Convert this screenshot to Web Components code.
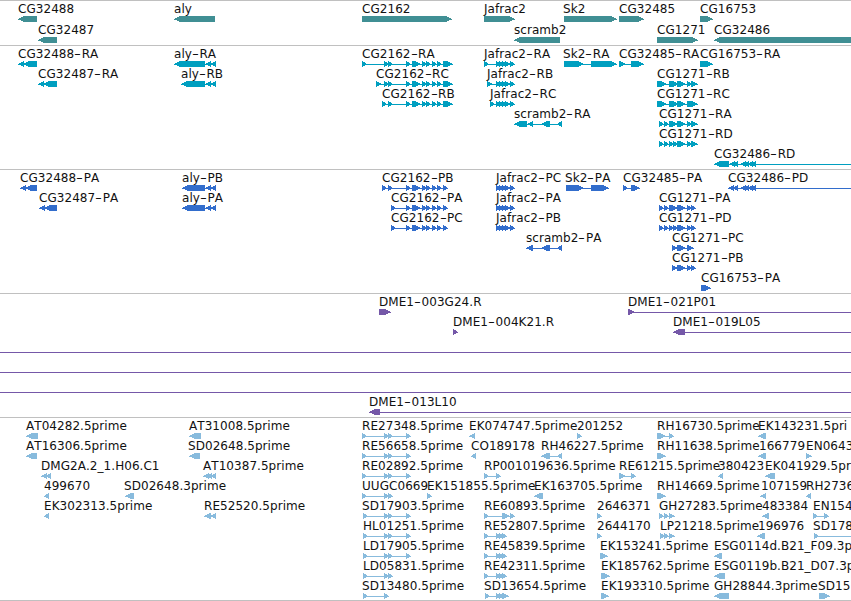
<!DOCTYPE html>
<html lang="en">
<head>
<meta charset="utf-8">
<title>Genome browser</title>
<style>
  html, body {
    margin: 0;
    background: #fff;
  }
  body {
    width: 851px;
    height: 601px;
    overflow: hidden;
  }
</style>
</head>
<body>
<genome-browser></genome-browser>

<script>
// Exon runs shared by several transcripts
const CG2162_CDS = '406-411 412-421 422-427 426-431 432-437 437-442';
const JAFRAC = '496-501 499-505 502-508 505-511 510-515';
const CG1271_MID = '677-686 687-692';
const CG32486_CDS = '740-746 744-749 748-753 751-756 851-870';

// Each lane is a list of [label, label x, strand, exons]
const TRACKS = [
  {
    name: 'gene', color: '#408f94', laneHeight: 21, gap: 2,
    lanes: [
      [
        ['CG32488', 18, '-', '18-37'],
        ['aly', 174, '-', '174-215'],
        ['CG2162', 362, '+', '362-452'],
        ['Jafrac2', 484, '+', '484-515'],
        ['Sk2', 563, '+', '564-617'],
        ['CG32485', 619, '+', '619-644'],
        ['CG16753', 700, '+', '700-713']
      ],
      [
        ['CG32487', 38, '-', '38-57'],
        ['scramb2', 514, '-', '514-560'],
        ['CG1271', 657, '+', '657-698'],
        ['CG32486', 714, '-', '714-870']
      ]
    ]
  },
  {
    name: 'transcript', color: '#009fc0', laneHeight: 20, gap: 3,
    lanes: [
      [
        ['CG32488-RA', 18, '-', '18-24 23-37'],
        ['aly-RA', 174, '-', '174-205 205-211 210-216'],
        ['CG2162-RA', 362, '+', `362-367 384-389 388-393 ${CG2162_CDS} 443-453`],
        ['Jafrac2-RA', 484, '+', `484-489 ${JAFRAC}`],
        ['Sk2-RA', 563, '+', '564-584 591-617'],
        ['CG32485-RA', 619, '+', '619-626 631-644'],
        ['CG16753-RA', 700, '+', '700-713']
      ],
      [
        ['CG32487-RA', 38, '-', '38-44 43-57'],
        ['aly-RB', 181, '-', '181-205 205-211 210-216'],
        ['CG2162-RC', 376, '+', `376-382 384-389 388-393 ${CG2162_CDS} 443-453`],
        ['Jafrac2-RB', 487, '+', `487-493 ${JAFRAC}`],
        ['CG1271-RB', 657, '+', `657-667 669-679 ${CG1271_MID} 691-698`]
      ],
      [
        ['CG2162-RB', 382, '+', `382-387 388-393 ${CG2162_CDS} 443-453`],
        ['Jafrac2-RC', 490, '+', `490-495 ${JAFRAC}`],
        ['CG1271-RC', 657, '+', '657-667 669-679 677-686 687-698']
      ],
      [
        ['scramb2-RA', 514, '-', '514-527 527-533 541-550 557-562'],
        ['CG1271-RA', 659, '+', `659-664 664-669 669-678 ${CG1271_MID} 691-698`]
      ],
      [
        ['CG1271-RD', 659, '+', `659-664 664-669 669-674 673-678 ${CG1271_MID} 691-698`]
      ],
      [
        ['CG32486-RD', 714, '-', `714-729 729-735 733-738 ${CG32486_CDS}`]
      ]
    ]
  },
  {
    name: 'protein', color: '#326dcc', laneHeight: 20, gap: 3,
    lanes: [
      [
        ['CG32488-PA', 20, '-', '20-26 25-37'],
        ['aly-PB', 182, '-', '182-205 205-211 210-216'],
        ['CG2162-PB', 382, '+', `382-387 388-393 ${CG2162_CDS} 443-448`],
        ['Jafrac2-PC', 496, '+', JAFRAC],
        ['Sk2-PA', 565, '+', '566-584 591-609'],
        ['CG32485-PA', 623, '+', '623-628 631-640'],
        ['CG32486-PD', 728, '-', `728-734 733-738 ${CG32486_CDS}`]
      ],
      [
        ['CG32487-PA', 39, '-', '39-45 44-57'],
        ['aly-PA', 182, '-', '182-205 205-211 210-216'],
        ['CG2162-PA', 391, '+', `391-396 ${CG2162_CDS} 443-448`],
        ['Jafrac2-PA', 496, '+', JAFRAC],
        ['CG1271-PA', 659, '+', `659-664 664-669 669-678 ${CG1271_MID} 691-696`]
      ],
      [
        ['CG2162-PC', 391, '+', `391-396 ${CG2162_CDS} 443-448`],
        ['Jafrac2-PB', 496, '+', JAFRAC],
        ['CG1271-PD', 659, '+', `659-664 664-669 669-674 673-678 ${CG1271_MID} 691-696`]
      ],
      [
        ['scramb2-PA', 526, '-', '526-533 541-550 557-562'],
        ['CG1271-PC', 672, '+', '672-678 677-686 687-694']
      ],
      [
        ['CG1271-PB', 672, '+', `672-678 ${CG1271_MID} 691-696`]
      ],
      [
        ['CG16753-PA', 701, '+', '701-711']
      ]
    ]
  },
  {
    name: 'bac', color: '#7558a8', laneHeight: 20, gap: 3,
    lanes: [
      [
        ['DME1-003G24.R', 379, '+', '379-391'],
        ['DME1-021P01', 628, '+', '628-635 860-870']
      ],
      [
        ['DME1-004K21.R', 453, '+', '453-458'],
        ['DME1-019L05', 673, '-', '673-685 860-870']
      ],
      [['', 0, '+', '0-0 860-870']],
      [['', 0, '+', '0-0 860-870']],
      [['', 0, '+', '0-0 860-870']],
      [
        ['DME1-013L10', 369, '-', '369-380 860-870']
      ]
    ]
  },
  {
    name: 'est', color: '#88bbdd', laneHeight: 20, gap: 2,
    lanes: [
      [
        ['AT04282.5prime', 26, '-', '26-38'],
        ['AT31008.5prime', 189, '-', '189-201'],
        ['RE27348.5prime', 362, '+', '362-367 384-389 388-393 406-411'],
        ['EK074747.5prime', 469, '-', '469-475'],
        ['201252', 577, '+', '577-582'],
        ['RH16730.5prime', 657, '+', '657-666 669-674'],
        ['EK143231.5pri', 758, '-', '758-766']
      ],
      [
        ['AT16306.5prime', 26, '-', '26-37'],
        ['SD02648.5prime', 188, '-', '189-200'],
        ['RE56658.5prime', 362, '+', '362-367 384-389 388-393 406-411'],
        ['CO189178', 471, '-', '471-476'],
        ['RH46227.5prime', 541, '-', '541-550 557-562'],
        ['RH11638.5prime', 657, '+', '657-666'],
        ['166779', 759, '-', '758-766'],
        ['EN0643', 806, '+', '806-812']
      ],
      [
        ['DMG2A.2_1.H06.C1', 41, '-', '41-47 46-51'],
        ['AT10387.5prime', 203, '-', '203-209 207-212 211-216'],
        ['RE02892.5prime', 362, '+', '362-367 384-389 388-393 406-411'],
        ['RP001019636.5prime', 484, '+', '484-489 496-501'],
        ['RE61215.5prime', 619, '+', '619-626 631-636'],
        ['380423', 718, '-', '718-723'],
        ['EK041929.5pr', 765, '-', '765-775']
      ],
      [
        ['499670', 44, '-', '44-49'],
        ['SD02648.3prime', 124, '-', '125-134'],
        ['UUGC0669', 362, '+', '362-367 384-389 388-393'],
        ['EK151855.5prime', 427, '+', '427-432'],
        ['EK163705.5prime', 534, '-', '534-543'],
        ['RH14669.5prime', 657, '+', '657-666'],
        ['107159', 761, '-', '760-766'],
        ['RH2736', 806, '-', '806-811']
      ],
      [
        ['EK302313.5prime', 44, '-', '44-49'],
        ['RE52520.5prime', 204, '-', '204-211 210-216'],
        ['SD17903.5prime', 362, '+', '363-368 384-389 388-393 406-411'],
        ['RE60893.5prime', 484, '+', '484-489 502-510 510-515'],
        ['2646371', 597, '+', '597-602'],
        ['GH27283.5prime', 659, '+', '659-664 664-669 669-675'],
        ['483384', 762, '-', '762-769'],
        ['EN154', 813, '+', '813-818 824-829']
      ],
      [
        ['HL01251.5prime', 363, '+', '363-368 384-389 388-393 406-411'],
        ['RE52807.5prime', 484, '+', '484-489 496-501 499-504 502-507'],
        ['2644170', 597, '+', '597-602'],
        ['LP21218.5prime', 660, '+', '660-665 664-669 669-675'],
        ['196976', 758, '-', '757-765'],
        ['SD178', 813, '+', '814-819 860-870']
      ],
      [
        ['LD17905.5prime', 363, '+', '363-368 384-389 388-393 406-411'],
        ['RE45839.5prime', 484, '+', '484-489 496-501 499-504 502-507'],
        ['EK153241.5prime', 600, '+', '600-608'],
        ['ESG0114d.B21_F09.3p', 714, '-', '714-722']
      ],
      [
        ['LD05831.5prime', 363, '+', '363-368 384-389 388-393'],
        ['RE42311.5prime', 484, '+', '484-489 496-501 499-504 502-507'],
        ['EK185762.5prime', 601, '+', '601-610'],
        ['ESG0119b.B21_D07.3p', 714, '-', '714-725']
      ],
      [
        ['SD13480.5prime', 362, '+', '363-368 384-389'],
        ['SD13654.5prime', 484, '+', '485-490 496-501 499-504 502-509'],
        ['EK193310.5prime', 601, '+', '601-609'],
        ['GH28844.3prime', 714, '-', '714-729'],
        ['SD15', 818, '+', '819-830']
      ]
    ]
  }
];

class GenomeFeature extends HTMLElement {
  constructor() {
    super();
    this.attachShadow({ mode: 'open' });
  }

  connectedCallback() {
    const labelX = Number(this.getAttribute('x'));
    const exons = this.getAttribute('exons').split(' ').map(e => e.split('-').map(Number));
    const start = exons[0][0];
    const end = exons[exons.length - 1][1];
    const strand = this.getAttribute('strand');

    this.shadowRoot.innerHTML = `
      <style>
        :host {
          display: flex;
          flex-direction: column;
          grid-area: 1 / 1;
          align-items: flex-start;
          min-width: 0;
        }
        .label {
          box-sizing: border-box;
          height: 15px;
          padding-top: 1px;
          line-height: 15px;
          margin-left: ${labelX}px;
          white-space: pre;
        }
        /* wide dash between the gene name and the suffix */
        ::slotted(i) {
          display: inline-block;
          width: 7.5px;
          font-style: normal;
          transform: scaleX(1.6);
          transform-origin: 0 50%;
        }
        svg {
          display: block;
          flex: none;
          margin-left: ${start}px;
          fill: var(--track-color);
        }
      </style>
      <span class="label"><slot></slot></span>
      <svg width="${end - start}" height="6" viewBox="${start} 0 ${end - start} 6" shape-rendering="crispEdges">
        ${exons.length > 1 ? `<rect x="${start}" y="3" width="${end - start}" height="1"/>` : ''}
        ${exons.map(([a, b]) => this.exonShape(a, b, strand)).join('')}
      </svg>
    `;
  }

  // Block with an arrow head of at most 6px pointing along the strand
  exonShape(a, b, strand) {
    if (b <= a) return '';
    const head = Math.min(6, b - a);
    const rows = [0.8, 0.45, 0.15, 0, 0.45, 0.8];
    return rows.map((cut, y) => {
      const width = Math.max(1, b - a - Math.round(cut * head));
      const x = strand === '+' ? a : b - width;
      return `<rect x="${x}" y="${y}" width="${width}" height="1"/>`;
    }).join('');
  }
}

class TrackLane extends HTMLElement {
  constructor() {
    super();
    this.attachShadow({ mode: 'open' });
    this.shadowRoot.innerHTML = `
      <style>
        :host {
          display: grid;
          grid-template-columns: 100%;
          align-items: start;
          height: var(--lane-height);
        }
      </style>
      <slot></slot>
    `;
  }
}

class GenomeTrack extends HTMLElement {
  constructor() {
    super();
    this.attachShadow({ mode: 'open' });
    this.shadowRoot.innerHTML = `
      <style>
        :host {
          display: flex;
          flex-direction: column;
          border-top: 1px solid #c0c0c0;
        }
      </style>
      <slot></slot>
    `;
  }
}

class GenomeBrowser extends HTMLElement {
  constructor() {
    super();
    this.attachShadow({ mode: 'open' });
  }

  connectedCallback() {
    this.shadowRoot.innerHTML = `
      <style>
        :host {
          display: flex;
          flex-direction: column;
          width: 851px;
          overflow: hidden;
          border-bottom: 1px solid #c0c0c0;
          font: 12px "DejaVu Sans", sans-serif;
          font-kerning: none;
          letter-spacing: 0.05px;
          color: #111;
        }
      </style>
      ${TRACKS.map(track => this.renderTrack(track)).join('')}
    `;
  }

  renderTrack(track) {
    const lanes = track.lanes.map(features => `<track-lane>${
      features.map(([label, x, strand, exons]) =>
        `<genome-feature x="${x}" strand="${strand}" exons="${exons}">${label.replace('-', '<i>-</i>')}</genome-feature>`
      ).join('')
    }</track-lane>`).join('');
    return `<genome-track style="--track-color: ${track.color}; --lane-height: ${track.laneHeight}px; padding-bottom: ${track.gap}px">${lanes}</genome-track>`;
  }
}

customElements.define('genome-feature', GenomeFeature);
customElements.define('track-lane', TrackLane);
customElements.define('genome-track', GenomeTrack);
customElements.define('genome-browser', GenomeBrowser);
</script>
</body>
</html>
